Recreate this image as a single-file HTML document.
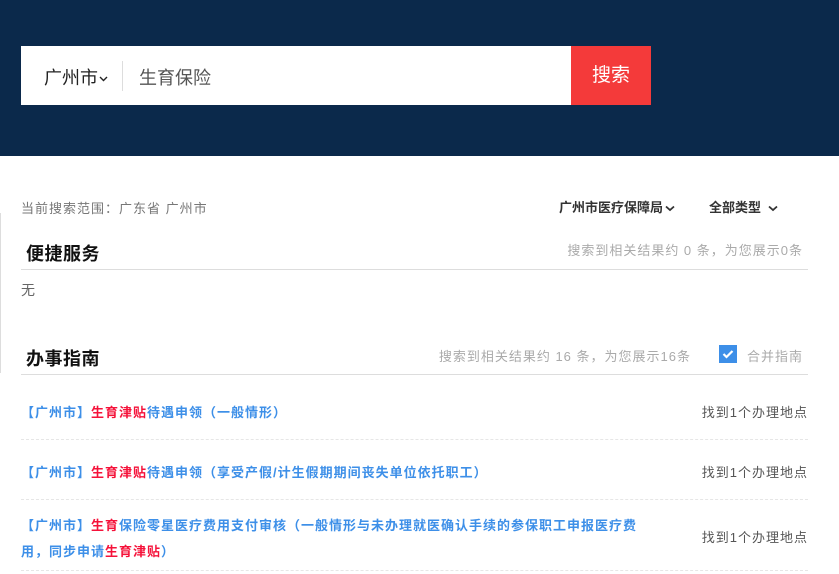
<!DOCTYPE html>
<html><head><meta charset="utf-8"><style>
*{margin:0;padding:0;box-sizing:border-box}
body{width:839px;height:574px;overflow:hidden;background:#fff;font-family:"Liberation Sans","Noto Sans CJK SC",sans-serif;position:relative}
.a{position:absolute;white-space:nowrap}
.hd{position:absolute;left:0;top:0;width:839px;height:156px;background:#0b294b}
.sb{position:absolute;left:21px;top:46px;width:550px;height:59px;background:#fff}
.btn{position:absolute;left:571px;top:46px;width:80px;height:59px;background:#f43a3a;color:#fff;font-size:19px;line-height:59px;text-align:center}
.line{position:absolute;left:21px;width:787px;height:1px;background:#ddd}
.dash{position:absolute;left:21px;width:787px;border-top:1px dashed #e6e6e6}
.it{font-size:13px;font-weight:bold;color:#3d8fe8;letter-spacing:1px}
.r{color:#f5123a}
.loc{font-size:13px;color:#555;right:31px;letter-spacing:1px}
.ls{letter-spacing:1px}
svg{display:inline-block;vertical-align:middle}
</style></head><body>
<div class="hd"></div>
<div class="sb"></div>
<div class="a" style="left:44px;top:64px;font-size:18px;color:#222">广州市<svg width="9" height="6" viewBox="0 0 9 6" style="margin-left:1px"><path d="M1 1l3.5 3.5L8 1" stroke="#222" stroke-width="1.4" fill="none"/></svg></div>
<div class="a" style="left:122px;top:61px;width:1px;height:30px;background:#ddd"></div>
<div class="a" style="left:139px;top:64px;font-size:18px;color:#555">生育保险</div>
<div class="btn">搜索</div>

<div class="a ls" style="left:21px;top:198px;font-size:13px;color:#777">当前搜索范围：广东省 广州市</div>
<div class="a" style="left:559px;top:197px;font-size:13px;font-weight:bold;color:#333">广州市医疗保障局<svg width="10" height="7" viewBox="0 0 10 7" style="margin-left:2px"><path d="M1 1.5l4 3.5 4-3.5" stroke="#333" stroke-width="1.8" fill="none"/></svg></div>
<div class="a" style="left:709px;top:197px;font-size:13px;font-weight:bold;color:#333">全部类型 <svg width="10" height="7" viewBox="0 0 10 7" style="margin-left:3px"><path d="M1 1.5l4 3.5 4-3.5" stroke="#333" stroke-width="1.8" fill="none"/></svg></div>

<div class="a" style="left:0;top:213px;width:1px;height:160px;background:#ddd"></div>
<div class="a" style="left:26px;top:240px;font-size:18px;font-weight:bold;color:#111;letter-spacing:0.5px">便捷服务</div>
<div class="a ls" style="right:36px;top:240px;font-size:13px;color:#aaa">搜索到相关结果约 0 条，为您展示0条</div>
<div class="line" style="top:269px"></div>
<div class="a" style="left:21px;top:280px;font-size:14px;color:#666">无</div>

<div class="a" style="left:26px;top:345px;font-size:18px;font-weight:bold;color:#111;letter-spacing:0.5px">办事指南</div>
<div class="a ls" style="right:148px;top:346px;font-size:13px;color:#aaa">搜索到相关结果约 16 条，为您展示16条</div>
<div class="a" style="left:719px;top:345px;width:18px;height:18px;background:#3d8fe8;"><svg width="18" height="18" viewBox="0 0 18 18"><path d="M4.5 9l3 3 6-6" stroke="#fff" stroke-width="2.2" fill="none"/></svg></div>
<div class="a ls" style="left:747px;top:346px;font-size:13px;color:#aaa">合并指南</div>
<div class="line" style="top:374px"></div>

<div class="a it" style="left:21px;top:402px">【广州市】<span class="r">生育津贴</span>待遇申领（一般情形）</div>
<div class="a loc" style="top:402px">找到1个办理地点</div>
<div class="dash" style="top:439px"></div>
<div class="a it" style="left:21px;top:462px">【广州市】<span class="r">生育津贴</span>待遇申领（享受产假/计生假期期间丧失单位依托职工）</div>
<div class="a loc" style="top:462px">找到1个办理地点</div>
<div class="dash" style="top:499px"></div>
<div class="a it" style="left:21px;top:513px;line-height:26px;white-space:normal;width:630px">【广州市】<span class="r">生育</span>保险零星医疗费用支付审核（一般情形与未办理就医确认手续的参保职工申报医疗费用，同步申请<span class="r">生育津贴</span>）</div>
<div class="a loc" style="top:527px">找到1个办理地点</div>
<div class="dash" style="top:570px"></div>
</body></html>
